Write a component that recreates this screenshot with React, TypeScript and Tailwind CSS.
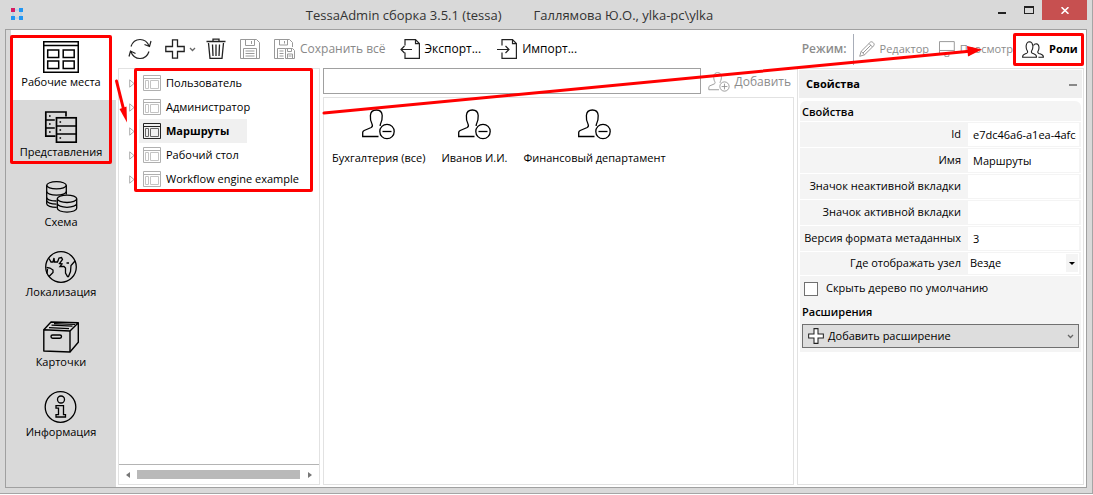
import { useState, type ReactNode } from 'react'

type IconProps = { className?: string }

function WorkplacesIcon() {
    return (
        <svg width="36" height="32" viewBox="0 0 36 32" fill="none" stroke="#000" strokeWidth="1.5" aria-hidden="true">
            <rect x="0.75" y="0.75" width="34.5" height="30.5" />
            <path d="M1 4.5h34" />
            <rect x="4.7" y="9" width="11" height="7.5" />
            <rect x="20.2" y="9" width="11" height="7.5" />
            <rect x="4.7" y="20" width="11" height="7.5" />
            <rect x="20.2" y="20" width="11" height="7.5" />
        </svg>
    )
}

function ViewsIcon() {
    return (
        <svg width="36" height="32" viewBox="0 0 36 32" fill="none" stroke="#000" strokeWidth="1.7" aria-hidden="true">
            <path d="M12.5 25.2H2.8V1H23v4.5M2.8 9h9M2.8 17h9" />
            <rect x="13.5" y="6.8" width="19.7" height="24.4" />
            <path d="M13.5 15h19.7M13.5 23h19.7" />
            <path d="M6 5h1.6M6 13h1.6M6 21h1.6M16.5 11h1.6M16.5 19h1.6M16.5 27h1.6" />
        </svg>
    )
}

function SchemeIcon() {
    return (
        <svg width="36" height="32" viewBox="0 0 36 32" fill="none" stroke="#000" strokeWidth="1.3" aria-hidden="true">
            <ellipse cx="13.5" cy="4.3" rx="9.8" ry="3.6" />
            <path d="M3.7 4.3v18.5c0 2 4.4 3.6 10 3.6M23.3 4.3v9.2" />
            <path d="M3.7 10.5c0 2 4.4 3.6 9.8 3.6s9.8-1.6 9.8-3.6M3.7 16.6c0 2 4.4 3.4 9.8 3.4M3.7 19.5c0 2 4.4 3.6 9.8 3.6" />
            <ellipse cx="24" cy="17.8" rx="9.7" ry="3.7" />
            <path d="M14.3 17.8v9.5c0 2.1 4.3 3.8 9.7 3.8s9.7-1.7 9.7-3.8v-9.5M14.3 22.5c0 2.1 4.3 3.8 9.7 3.8s9.7-1.7 9.7-3.8" />
        </svg>
    )
}

function GlobeIcon() {
    return (
        <svg width="36" height="32" viewBox="0 0 36 32" fill="none" stroke="#000" strokeWidth="1.3" aria-hidden="true">
            <circle cx="18" cy="16" r="15.3" />
            <path d="M6 7.5l2 3.5h2l1-4 .5 4h3l1.5-4 2.5-.5 1 2-3 4 2.5.5-2 2.5h4l1.5 1.5v5l2 3.5h1l2-5 .5-6 4-4.5M26 12h-2.5" />
            <path d="M3.5 16.5l3.5.5 3 2v2.5l-4 4M4.5 18l-.5 4.5" />
        </svg>
    )
}

function CardsIcon() {
    return (
        <svg width="36" height="32" viewBox="0 0 36 32" fill="none" stroke="#000" strokeWidth="1.4" strokeLinejoin="round" aria-hidden="true">
            <path d="M.8 8.7L27 10v21L.8 30z" />
            <path d="M.8 8.7L8 1l27.3.7L27 10M35.3 1.7v19.5L27 31" />
            <path d="M6 6.7l20 1M8.5 4.2l21 1M11 2.7l21 .8" strokeWidth="1.2" />
            <rect x="8" y="14" width="10.5" height="3.2" rx="1.6" />
        </svg>
    )
}

function InfoIcon() {
    return (
        <svg width="36" height="32" viewBox="0 0 36 32" fill="none" stroke="#000" strokeWidth="1.3" aria-hidden="true">
            <circle cx="17.5" cy="16" r="15.3" />
            <circle cx="18" cy="8.5" r="3.5" />
            <path d="M13 14.7h7.5v9h2v2.3H13v-2.3h2.5v-6.5H13z" />
        </svg>
    )
}

function RefreshIcon() {
    return (
        <svg width="24" height="22" viewBox="0 0 24 22" fill="none" stroke="#222" strokeWidth="1.2" aria-hidden="true">
            <path d="M3 8.5C4.5 4 8 1.5 12 1.5c4 0 7.5 2.5 9 6.5M16.5 6.5l5 2 1.500-5.500" />
            <path d="M21 13.5c-1.5 4.5-5 7-9 7-4 0-7.5-2.5-9-6.5M1 18.5l1.5-5.5 5 2.5" />
        </svg>
    )
}

function PlusIcon({ className }: IconProps) {
    return (
        <svg className={className} viewBox="0 0 20 20" fill="#fff" stroke="#222" strokeWidth="1.3" aria-hidden="true">
            <path d="M7.5 .8h5v6.7h6.7v5h-6.7v6.7h-5v-6.7H.8v-5h6.7z" />
        </svg>
    )
}

function ChevronIcon() {
    return (
        <svg width="7" height="5" viewBox="0 0 7 5" fill="none" stroke="#666" strokeWidth="1.3" aria-hidden="true">
            <path d="M1 1l2.5 2.5L6 1" />
        </svg>
    )
}

function TrashIcon() {
    return (
        <svg width="20" height="22" viewBox="0 0 20 22" fill="none" stroke="#222" strokeWidth="1.3" aria-hidden="true">
            <path d="M.5 3.5h19M7 3V1.2h6V3M2.5 5l1.5 15.3h12L17.5 5M6.5 6.5l.5 11.5M10 6.5V18M13.5 6.5L13 18" />
        </svg>
    )
}

function SaveIcon() {
    return (
        <svg width="20" height="20" viewBox="0 0 20 20" fill="none" stroke="#999" aria-hidden="true">
            <path d="M.5 .5h16l3 3v16H.5z" />
            <path d="M5.5 .5v6h9v-6M11.5 2v3M3.5 19V9.5h13V19M5.5 12h9M5.5 14.5h9M5.5 17h9" />
        </svg>
    )
}

function SaveAllIcon() {
    return (
        <svg width="21" height="20" viewBox="0 0 21 20" fill="none" stroke="#999" aria-hidden="true">
            <path d="M10 19.5H.5V.5h15l3 3V8M5.5 .5v5.5h8v-5.500M10.5 2v2.5M3.5 19V9.5h8M5.5 12h4M5.5 14.5h4M5.5 17h4" />
            <path d="M11.5 9.5h7l2 2v8h-9zM13.5 9.5v3h4v-3M13.5 19v-4h5v4M14.5 17h3" />
        </svg>
    )
}

function ExportIcon() {
    return (
        <svg width="20" height="20" viewBox="0 0 20 20" fill="none" stroke="#222" strokeWidth="1.2" aria-hidden="true">
            <path d="M5 6.5V.6h10.5l3.9 3.9v14.9H5v-5.9M15.5 .6v4h4" />
            <path d="M12 10.5H1M4.5 7L1 10.5 4.5 14" />
        </svg>
    )
}

function ImportIcon() {
    return (
        <svg width="20" height="20" viewBox="0 0 20 20" fill="none" stroke="#222" strokeWidth="1.2" aria-hidden="true">
            <path d="M5 6.5V.6h10.5l3.9 3.9v14.9H5v-5.9M15.5 .6v4h4" />
            <path d="M0 10.5h12M8.5 7l3.5 3.5L8.5 14" />
        </svg>
    )
}

function PencilIcon() {
    return (
        <svg width="16" height="16" viewBox="0 0 16 16" fill="none" stroke="#999" aria-hidden="true">
            <path d="M.7 15.3l1.5-5L11.5 1c1.5-1 4.5 1.5 3.5 3.5L5.5 13.8zM2.2 10.3l3.3 3.5M10 2.5L13.5 6M4 12l8-8" />
        </svg>
    )
}

function MonitorIcon() {
    return (
        <svg width="16" height="16" viewBox="0 0 16 16" fill="none" stroke="#999" aria-hidden="true">
            <path d="M.5 .5h15v12H.5zM.5 9.5h15M6 12.5v3h4v-3" />
        </svg>
    )
}

function RolesIcon() {
    return (
        <svg width="22" height="17" viewBox="0 0 22 17" fill="none" stroke="#222" strokeWidth="1.1" aria-hidden="true">
            <path d="M.6 16.3c-.3-3 1.4-3 4-4 1.2-.5 1.2-1.5.7-2.5C3.5 7 3.5 1 7.5 .7c4 .3 4 6.3 2.2 9-.5 1-.5 2 .8 2.6 2.5 1 4.3 1 4 4z" />
            <path d="M11.5 4.5c.7-1.5 1.8-1.8 2.8-1.8 3.2.2 3.2 5.3 1.7 7.5-.4.8-.3 1.8.7 2.2 3 1 4.9 1 4.7 3.9h-5" />
        </svg>
    )
}

function PersonIcon({ sign, className }: IconProps & { sign: 'plus' | 'minus' }) {
    return (
        <svg className={className} viewBox="0 0 33 31" fill="none" stroke="currentColor" strokeWidth="1.3" aria-hidden="true">
            <path d="M16.5 27.500H.7v-4c0-1 .5-1.5 1.5-2l7-3c1.5-.8 1.5-2 .8-3.5-1.5-2.5-1.8-6-1.6-8.500.2-3.500 2.500-5.500 6-5.500s5.600 2 5.800 5.500c.1 2.500-.2 6-1.700 8.500-.3.700-.4 1.300-.3 2" />
            <circle cx="25" cy="22.5" r="7.2" />
            <path d={sign === 'plus' ? 'M20.5 22.5h9M25 18v9' : 'M20.5 22.5h9'} />
        </svg>
    )
}

function TreeIcon({ active }: { active: boolean }) {
    return (
        <svg width="18" height="16" viewBox="0 0 18 16" fill="none" stroke={active ? '#222' : '#b0b0b0'} aria-hidden="true">
            <path d="M.5 .5h17v15H.5zM.5 3.5h17" />
            <path d="M2.5 5.5h3v8h-3zM7.5 5.5h8v8h-8z" stroke={active ? '#666' : '#c4c4c4'} />
        </svg>
    )
}

const sections = [
    { title: 'Рабочие места', icon: <WorkplacesIcon /> },
    { title: 'Представления', icon: <ViewsIcon /> },
    { title: 'Схема', icon: <SchemeIcon /> },
    { title: 'Локализация', icon: <GlobeIcon /> },
    { title: 'Карточки', icon: <CardsIcon /> },
    { title: 'Информация', icon: <InfoIcon /> },
]

const treeNodes = ['Пользователь', 'Администратор', 'Маршруты', 'Рабочий стол', 'Workflow engine example']

const roles = ['Бухгалтерия (все)', 'Иванов И.И.', 'Финансовый департамент']

const properties = [
    { id: 'node-id', label: 'Id', value: 'e7dc46a6-a1ea-4afc-9d3b' },
    { id: 'node-name', label: 'Имя', value: 'Маршруты' },
    { id: 'icon-inactive', label: 'Значок неактивной вкладки', value: '' },
    { id: 'icon-active', label: 'Значок активной вкладки', value: '' },
    { id: 'meta-version', label: 'Версия формата метаданных', value: '3' },
]

function TitleBar() {
    return (
        <header className="flex h-[29px] items-start">
            <svg className="mt-2 ml-[11px]" width="12" height="12" viewBox="0 0 12 12" aria-hidden="true">
                <path d="M2 2h8v8H2z" fill="none" stroke="#9fcdf0" />
                <path d="M0 0h4v4H0z" fill="#d81b60" />
                <path d="M8 0h4v4H8zM0 8h4v4H0zM8 8h4v4H8z" fill="#2196f3" />
            </svg>
            <h1 className="flex flex-1 justify-center gap-8 pt-1 pl-2 text-[13px] leading-[22px] whitespace-nowrap text-[#333]">
                <span>TessaAdmin сборка 3.5.1 (tessa)</span>
                <span>Галлямова Ю.О., ylka-pc\ylka</span>
            </h1>
            <div className="mr-[5px] flex h-5">
                <button aria-label="Свернуть" className="flex w-7 items-center justify-center">
                    <span className="mt-1.5 h-[2px] w-2 bg-[#222]" />
                </button>
                <button aria-label="Развернуть" className="flex w-[26px] items-center justify-center">
                    <span className="h-2 w-2.5 border border-t-2 border-[#222]" />
                </button>
                <button aria-label="Закрыть" className="flex w-[45px] items-center justify-center bg-[#c75050]">
                    <svg width="8" height="7" viewBox="0 0 8 7" stroke="#fff" strokeWidth="1.6" aria-hidden="true">
                        <path d="M.5 .2l7 6.6M7.5 .2l-7 6.6" />
                    </svg>
                </button>
            </div>
        </header>
    )
}

function Sidebar() {
    return (
        <nav className="relative w-[110px] shrink-0 bg-[#d9d9d9] pl-[5px]">
            {sections.map((section, i) => (
                <button
                    key={section.title}
                    className={`flex h-[70px] w-full flex-col items-center pt-[11px] pr-[5px] text-[11px] leading-[18px] ${i === 0 ? 'bg-white' : ''}`}
                >
                    {section.icon}
                    <span className="whitespace-nowrap">{section.title}</span>
                </button>
            ))}
            <span className="pointer-events-none absolute top-[5px] left-1 h-[129px] w-[102px] rounded-xs border-3 border-[#f00]" />
        </nav>
    )
}

function ToolButton({ label, children, className = '' }: { label?: string; children: ReactNode; className?: string }) {
    return (
        <button className={`flex items-center gap-[5px] whitespace-nowrap ${className}`}>
            {children}
            {label && <span>{label}</span>}
        </button>
    )
}

function Toolbar() {
    return (
        <div className="flex h-[38px] items-center justify-between pl-3 text-[12px]">
            <div className="flex items-center">
                <ToolButton><RefreshIcon /></ToolButton>
                <ToolButton className="ml-[13px]"><PlusIcon className="h-5 w-5" /></ToolButton>
                <ToolButton className="ml-1"><ChevronIcon /></ToolButton>
                <ToolButton className="ml-2.5"><TrashIcon /></ToolButton>
                <ToolButton className="ml-3.5"><SaveIcon /></ToolButton>
                <ToolButton label="Сохранить всё" className="ml-3.5 text-[#888]"><SaveAllIcon /></ToolButton>
                <ToolButton label="Экспорт..." className="ml-3.5"><ExportIcon /></ToolButton>
                <ToolButton label="Импорт..." className="ml-4"><ImportIcon /></ToolButton>
            </div>
            <div className="flex h-full items-center text-[11px] text-[#8c8c8c]">
                <span className="mr-1.5 text-[12px] font-semibold">Режим:</span>
                <span className="h-[31px] w-px bg-[#a8adb8]" />
                <ToolButton label="Редактор" className="ml-[5px]"><PencilIcon /></ToolButton>
                <ToolButton label="Просмотр" className="ml-2.5 w-[74px] overflow-hidden"><MonitorIcon /></ToolButton>
                <ToolButton label="Роли" className="mr-0.5 h-[33px] w-[71px] rounded-xs border-3 border-[#f00] pl-1.5 font-bold text-black">
                    <RolesIcon />
                </ToolButton>
            </div>
        </div>
    )
}

function WorkplaceTree() {
    const [selected, setSelected] = useState('Маршруты')
    return (
        <section className="relative flex w-[202px] shrink-0 flex-col border border-[#e2e2e2]">
            <ul className="flex-1 pt-0.5 pl-2.5 text-[11px]">
                {treeNodes.map((node) => (
                    <li key={node} className="flex h-6 items-center">
                        <svg className="shrink-0" width="6" height="9" viewBox="0 0 6 9" fill="none" stroke="#aaa" aria-hidden="true">
                            <path d="M.7 .8v7.4L5 4.5z" />
                        </svg>
                        <button
                            onClick={() => setSelected(node)}
                            className={`ml-1 flex h-6 items-center gap-[5px] pr-[18px] pl-1 whitespace-nowrap ${node === selected ? 'bg-[#f0f0f0] font-bold' : ''}`}
                        >
                            <TreeIcon active={node === selected} />
                            {node}
                        </button>
                    </li>
                ))}
            </ul>
            <div className="flex h-5 items-center justify-between border-t border-[#b4b4b4] px-[7px]">
                <svg width="4" height="6" viewBox="0 0 4 6" fill="#777" aria-hidden="true"><path d="M4 0v6L0 3z" /></svg>
                <span className="mr-2 ml-[7px] h-[9px] flex-1 bg-[#b9b9b9]" />
                <svg width="4" height="6" viewBox="0 0 4 6" fill="#777" aria-hidden="true"><path d="M0 0v6l4-3z" /></svg>
            </div>
            <span className="pointer-events-none absolute -top-px left-[15px] h-[124px] w-[179px] rounded-xs border-3 border-[#f00]" />
        </section>
    )
}

function RolesPanel() {
    return (
        <section className="flex min-w-0 flex-1 flex-col gap-[3px]">
            <div className="flex h-[26px] items-center">
                <input type="text" aria-label="Роль" className="h-full min-w-0 flex-1 border border-[#a0a0a0] px-1 text-[11px] outline-none" />
                <button className="ml-[7px] flex items-center gap-[5px] pt-0.5 pr-[3px] text-[12px] whitespace-nowrap text-[#8c8c8c]">
                    <PersonIcon sign="plus" className="h-5 w-[22px]" />
                    Добавить
                </button>
            </div>
            <ul className="flex flex-1 items-start gap-4 border border-[#e2e2e2] pt-[11px] pl-2 text-[11px]">
                {roles.map((role) => (
                    <li key={role} className="flex flex-col items-center gap-[9px] leading-[18px] whitespace-nowrap">
                        <PersonIcon sign="minus" className="h-[31px] w-[33px]" />
                        {role}
                    </li>
                ))}
            </ul>
        </section>
    )
}

function PropertiesPanel() {
    return (
        <section className="w-[287px] shrink-0 border border-[#e2e2e2] p-px text-[11px]">
            <div className="flex h-7 items-center justify-between bg-[#efefef] pt-px pr-[5px] pl-[7px] font-bold">
                <h2>Свойства</h2>
                <button aria-label="Свернуть панель" className="flex h-4 w-2 items-center">
                    <span className="h-[2px] w-2 bg-[#888]" />
                </button>
            </div>
            <div className="mx-px mt-[3px] rounded-t-md bg-[#f4f4f4] pb-1">
                <h3 className="h-5 pl-0.5 leading-[22px] font-semibold">Свойства</h3>
                {properties.map(({ id, label, value }) => (
                    <div key={id} className="flex h-[26px] items-center border-t border-white pr-0.5">
                        <label htmlFor={id} className="flex-1 pr-[7px] text-right whitespace-nowrap">{label}</label>
                        <input id={id} type="text" defaultValue={value} className="h-[23px] w-[111px] shrink-0 bg-white pr-[3px] pl-[5px] outline-none" />
                    </div>
                ))}
                <div className="flex h-6 items-center border-t border-white pr-0.5">
                    <label htmlFor="visibility" className="flex-1 pr-[7px] text-right whitespace-nowrap">Где отображать узел</label>
                    <div className="relative w-[111px]">
                        <select id="visibility" className="h-[21px] w-full appearance-none bg-white pl-0.5 outline-none">
                            <option>Везде</option>
                        </select>
                        <span className="pointer-events-none absolute top-px right-px flex h-[18px] w-3 items-center justify-center bg-[#f4f4f4]">
                            <svg width="6" height="3" viewBox="0 0 6 3" aria-hidden="true"><path d="M0 0h6L3 3z" /></svg>
                        </span>
                    </div>
                </div>
                <label className="flex h-[26px] items-center gap-2 border-t border-white pl-1">
                    <input type="checkbox" className="h-3.5 w-3.5 appearance-none border border-[#707070] bg-white checked:bg-[#707070]" />
                    Скрыть дерево по умолчанию
                </label>
                <h3 className="h-[23px] pl-0.5 leading-[22px] font-semibold">Расширения</h3>
                <div className="px-0.5">
                    <button className="flex h-6 w-full items-center border border-[#707070] bg-[#ddd] pr-1 pl-[5px]">
                        <PlusIcon className="mr-1 h-4 w-4" />
                        <span className="flex-1 text-left">Добавить расширение</span>
                        <ChevronIcon />
                    </button>
                </div>
            </div>
        </section>
    )
}

// Red arrows drawn over the panels
function Arrows() {
    return (
        <>
            <svg className="pointer-events-none absolute top-[78px] left-[114px]" width="16" height="46" viewBox="0 0 16 46" aria-hidden="true">
                <path d="M2.5 3l7.5 30" stroke="#f00" strokeWidth="3" strokeLinecap="round" />
                <path d="M5.5 31l7-2.5.5 16z" fill="#f00" />
            </svg>
            <svg className="pointer-events-none absolute top-10 left-[322px]" width="664" height="78" viewBox="0 0 664 78" aria-hidden="true">
                <path d="M2 73L650 11" stroke="#f00" strokeWidth="3" strokeLinecap="round" />
                <path d="M645 6l15 3.5-14 7z" fill="#f00" />
            </svg>
        </>
    )
}

export default function App() {
    return (
        <div className="flex min-h-screen flex-col bg-white pb-px font-['Open_Sans','Noto_Sans',sans-serif] text-black">
            <div className="relative flex flex-1 flex-col border-r border-b border-[#a5a5a5] bg-[#d9d9d9] pr-[5px] pb-[5px] pl-[5px]">
                <div className="-mx-[5px]"><TitleBar /></div>
                <div className="flex flex-1 border border-[#a0a0a0] bg-white">
                    <Sidebar />
                    <div className="flex min-w-0 flex-1 flex-col">
                        <Toolbar />
                        <main className="flex flex-1 gap-[3px] pr-0.5 pb-0.5 pl-0.5">
                            <WorkplaceTree />
                            <RolesPanel />
                            <PropertiesPanel />
                        </main>
                    </div>
                </div>
                <Arrows />
            </div>
        </div>
    )
}
